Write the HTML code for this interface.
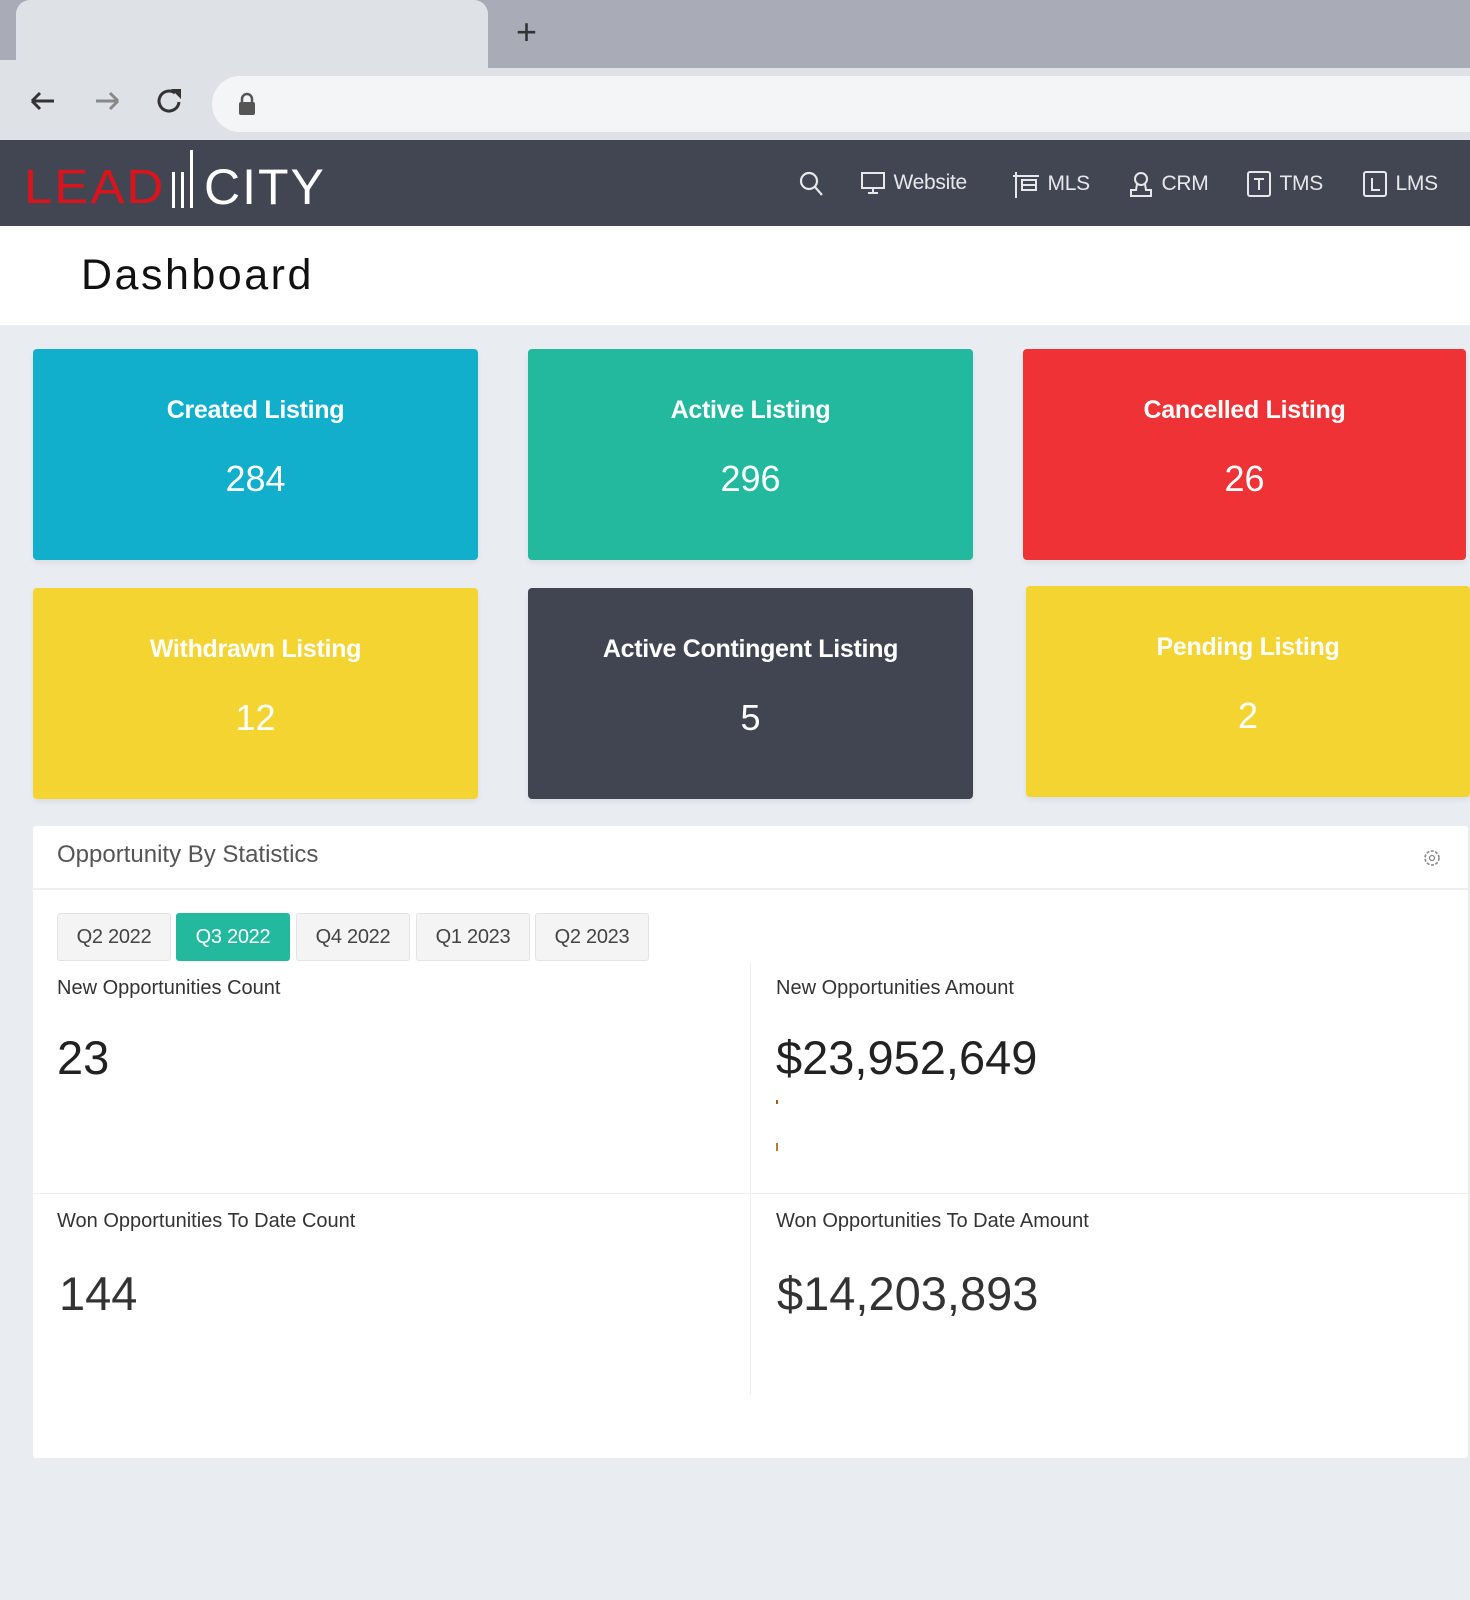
<!DOCTYPE html>
<html><head><meta charset="utf-8"><style>
*{margin:0;padding:0;box-sizing:border-box}
body{width:1470px;height:1600px;background:#e9ecf0;font-family:"Liberation Sans",sans-serif;position:relative;overflow:hidden}
.abs{position:absolute}
.card{position:absolute;border-radius:4px;color:#fff;text-align:center;box-shadow:0 3px 6px rgba(0,0,0,.06)}
.card .t{position:absolute;left:0;right:0;top:47px;font-size:25px;font-weight:bold;letter-spacing:-0.3px}
.card .n{position:absolute;left:0;right:0;top:109px;font-size:36px}
.nav{position:absolute;top:170px;color:#e6e8ec;font-size:21px;letter-spacing:-0.3px;display:flex;align-items:center}
.btn{position:absolute;top:913px;height:48px;width:114px;background:#f4f4f4;border:1px solid #e3e3e3;border-radius:3px;font-size:20px;color:#444;text-align:center;line-height:46px;letter-spacing:-0.3px}
.lbl{position:absolute;font-size:20px;color:#333;letter-spacing:0px}
.big{position:absolute;font-size:47px;color:#222}
</style></head><body>
<div class="abs" style="left:0;top:0;width:1470px;height:70px;background:#a9acb7"></div>
<div class="abs" style="left:16px;top:0;width:472px;height:70px;background:#dee1e6;border-radius:14px 14px 0 0"></div>
<div class="abs" style="left:0;top:60px;width:20px;height:12px;background:#dee1e6"></div>
<div class="abs" style="left:516px;top:12px;font-size:36px;color:#333;line-height:40px">+</div>
<div class="abs" style="left:0;top:68px;width:1470px;height:72px;background:#dee1e6"></div>
<div class="abs" style="left:212px;top:76px;width:1270px;height:56px;background:#f4f5f7;border-radius:28px 0 0 28px"></div>
<svg class="abs" style="left:24px;top:84px" width="200" height="40" viewBox="0 0 200 40">
<path d="M30 17H8M8 17l8-8M8 17l8 8" stroke="#333" stroke-width="3" fill="none"/>
<path d="M72 17H94M94 17l-8-8M94 17l-8 8" stroke="#888" stroke-width="3" fill="none"/>
<path d="M151 9a10 10 0 1 0 4 9" stroke="#333" stroke-width="3" fill="none"/><path d="M147 5h10v10z" fill="#333"/>
</svg>
<svg class="abs" style="left:238px;top:92px" width="18" height="24"><path d="M4 10V7a5 5 0 0 1 10 0v3" stroke="#555" stroke-width="2.5" fill="none"/><rect x="1" y="10" width="16" height="13" rx="2" fill="#555"/></svg>
<div class="abs" style="left:0;top:140px;width:1470px;height:86px;background:#424652"></div>
<div class="abs" style="left:24px;top:164px;font-size:48px;color:#d9141c;letter-spacing:2px;line-height:48px;transform-origin:left;transform:scaleX(1.06)">LEAD</div>
<div class="abs" style="left:172px;top:172px;width:3px;height:36px;background:#fff"></div>
<div class="abs" style="left:181px;top:172px;width:3px;height:36px;background:#fff"></div>
<div class="abs" style="left:190px;top:150px;width:3px;height:58px;background:#fff"></div>
<div class="abs" style="left:204px;top:162px;font-size:50px;color:#fff;letter-spacing:2px;line-height:50px">CITY</div>
<svg class="abs" style="left:798px;top:170px" width="28" height="30"><circle cx="11" cy="11" r="8" stroke="#e6e8ec" stroke-width="2.2" fill="none"/><path d="M17 17l7 8" stroke="#e6e8ec" stroke-width="2.2"/></svg>
<div class="nav" style="left:860px"><svg width="28" height="26"><rect x="2" y="3" width="22" height="15" stroke="#e6e8ec" stroke-width="2" fill="none"/><path d="M13 18v4M8 23h10" stroke="#e6e8ec" stroke-width="2"/></svg>&nbsp;Website</div>
<div class="nav" style="left:1012px"><svg width="30" height="28"><path d="M4 2v26M1 6h26M10 10h14v10H10zM10 15h14" stroke="#e6e8ec" stroke-width="2" fill="none"/></svg>&nbsp;MLS</div>
<div class="nav" style="left:1128px"><svg width="28" height="28"><circle cx="13" cy="9" r="6" stroke="#e6e8ec" stroke-width="2" fill="none"/><path d="M9 14l-1 6H3v6h20v-6h-5l-1-6" stroke="#e6e8ec" stroke-width="2" fill="none"/></svg>&nbsp;CRM</div>
<div class="nav" style="left:1246px"><svg width="28" height="28"><rect x="2" y="2" width="22" height="24" rx="2" stroke="#e6e8ec" stroke-width="2" fill="none"/><path d="M8 9h10M13 9v11" stroke="#e6e8ec" stroke-width="2"/></svg>&nbsp;TMS</div>
<div class="nav" style="left:1362px"><svg width="28" height="28"><rect x="2" y="2" width="22" height="24" rx="2" stroke="#e6e8ec" stroke-width="2" fill="none"/><path d="M10 8v12h8" stroke="#e6e8ec" stroke-width="2" fill="none"/></svg>&nbsp;LMS</div>
<div class="abs" style="left:0;top:226px;width:1470px;height:99px;background:#fff"></div>
<div class="abs" style="left:81px;top:251px;font-size:43px;color:#111;letter-spacing:2.5px">Dashboard</div>
<div class="card" style="left:33px;top:349px;width:445px;height:211px;background:#12afcd"><div class="t">Created Listing</div><div class="n">284</div></div>
<div class="card" style="left:528px;top:349px;width:445px;height:211px;background:#22b99e"><div class="t">Active Listing</div><div class="n">296</div></div>
<div class="card" style="left:1023px;top:349px;width:443px;height:211px;background:#ef3235"><div class="t">Cancelled Listing</div><div class="n">26</div></div>
<div class="card" style="left:33px;top:588px;width:445px;height:211px;background:#f4d431"><div class="t">Withdrawn Listing</div><div class="n">12</div></div>
<div class="card" style="left:528px;top:588px;width:445px;height:211px;background:#414552"><div class="t">Active Contingent Listing</div><div class="n">5</div></div>
<div class="card" style="left:1026px;top:586px;width:444px;height:211px;background:#f4d431"><div class="t">Pending Listing</div><div class="n">2</div></div>
<div class="abs" style="left:33px;top:826px;width:1435px;height:632px;background:#fff;border-radius:3px"></div>
<div class="abs" style="left:33px;top:888px;width:1435px;height:2px;background:#eef0f2"></div>
<div class="abs" style="left:57px;top:841px;font-size:24px;color:#555;letter-spacing:0px">Opportunity By Statistics</div>
<svg class="abs" style="left:1422px;top:848px" width="20" height="20" viewBox="0 0 20 20"><circle cx="10" cy="10" r="7" stroke="#888" stroke-width="1.6" fill="none" stroke-dasharray="3 1.5"/><circle cx="10" cy="10" r="2.5" stroke="#888" stroke-width="1.3" fill="none"/></svg>
<div class="btn" style="left:57px">Q2 2022</div>
<div class="btn" style="left:176px;background:#22b99e;border-color:#22b99e;color:#fff">Q3 2022</div>
<div class="btn" style="left:296px">Q4 2022</div>
<div class="btn" style="left:416px">Q1 2023</div>
<div class="btn" style="left:535px">Q2 2023</div>
<div class="abs" style="left:750px;top:963px;width:1px;height:432px;background:#eceef0"></div>
<div class="abs" style="left:33px;top:1193px;width:1435px;height:1px;background:#eceef0"></div>
<div class="lbl" style="left:57px;top:977px">New Opportunities Count</div>
<div class="lbl" style="left:776px;top:977px">New Opportunities Amount</div>
<div class="big" style="left:57px;top:1030px">23</div>
<div class="big" style="left:776px;top:1030px">$23,952,649</div>
<div class="abs" style="left:776px;top:1100px;width:2px;height:4px;background:#a05a20"></div>
<div class="abs" style="left:776px;top:1143px;width:2px;height:8px;background:#c07a30"></div>
<div class="lbl" style="left:57px;top:1210px">Won Opportunities To Date Count</div>
<div class="lbl" style="left:776px;top:1210px">Won Opportunities To Date Amount</div>
<div class="big" style="left:59px;top:1266px;color:#333">144</div>
<div class="big" style="left:777px;top:1266px;color:#333">$14,203,893</div>
</body></html>
